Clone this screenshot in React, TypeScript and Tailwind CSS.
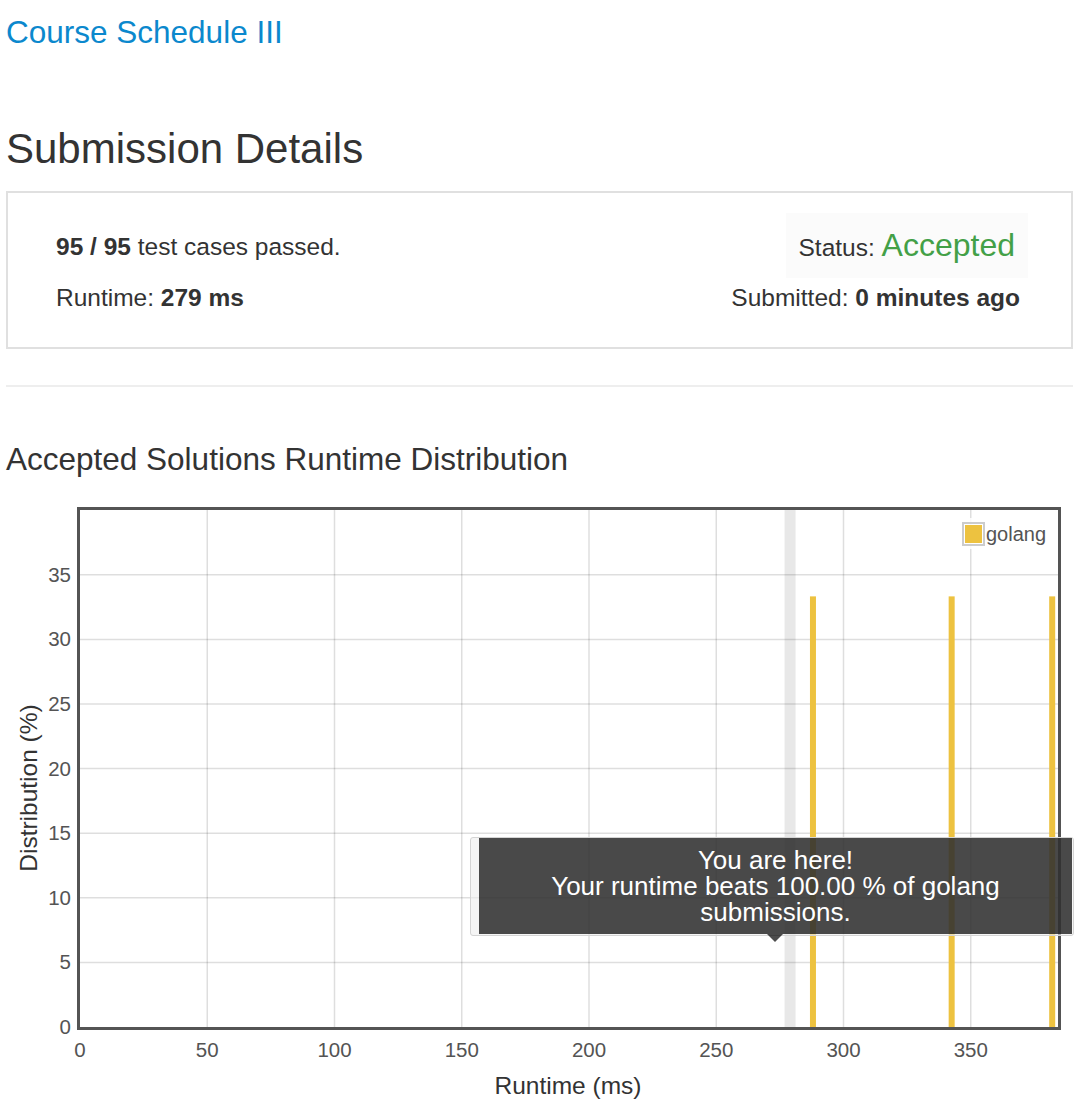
const X0 = 74;
const XS = 2.545;
const Y0 = 520;
const YS = 12.92;

const xTicks = [0, 50, 100, 150, 200, 250, 300, 350];
const yTicks = [0, 5, 10, 15, 20, 25, 30, 35];
const bars = [288, 342.5, 382];

function RuntimeChart() {
  return (
    <div className="relative mt-[30px] h-[594px]">
      <svg width={1067} height={594} className="block">
        <rect x={X0 + 279 * XS - 5.5} y={3} width={11} height={517} fill="#e8e8e8" />
        {xTicks.slice(1).map((v) => (
          <line
            key={`gx${v}`}
            x1={X0 + v * XS}
            x2={X0 + v * XS}
            y1={3}
            y2={520}
            stroke="rgba(0,0,0,0.13)"
            strokeWidth={1.5}
          />
        ))}
        {yTicks.slice(1).map((v) => (
          <line
            key={`gy${v}`}
            x1={74}
            x2={1052}
            y1={Y0 - v * YS}
            y2={Y0 - v * YS}
            stroke="rgba(0,0,0,0.13)"
            strokeWidth={1.5}
          />
        ))}
        {bars.map((ms) => (
          <rect
            key={ms}
            x={X0 + ms * XS - 3}
            y={Y0 - 33.33 * YS}
            width={6}
            height={33.33 * YS}
            fill="#edc240"
          />
        ))}
        <rect x={72.5} y={1.5} width={981} height={520} fill="none" stroke="#545454" strokeWidth={3} />
        {yTicks.map((v) => (
          <text key={`ly${v}`} x={65} y={Y0 - v * YS + 7} fontSize={20.5} fill="#545454" textAnchor="end">
            {v}
          </text>
        ))}
        {xTicks.map((v) => (
          <text key={`lx${v}`} x={X0 + v * XS} y={550} fontSize={20.5} fill="#545454" textAnchor="middle">
            {v}
          </text>
        ))}
        <text x={562} y={587} fontSize={24.5} fill="#333333" textAnchor="middle">
          Runtime (ms)
        </text>
        <text
          x={31}
          y={281}
          fontSize={24.5}
          fill="#333333"
          textAnchor="middle"
          transform="rotate(-90 31 281)"
        >
          Distribution (%)
        </text>
      </svg>

      {/* legend */}
      <div className="absolute left-[954px] top-[11px] flex h-[31px] items-center bg-white/85 pl-[2px] pr-[4px]">
        <div className="h-[24px] w-[23px] border-2 border-[#cccccc] p-[1px]">
          <div className="h-full w-full bg-[#edc240]" />
        </div>
        <span className="ml-[1px] text-[20px] leading-[24px] text-[#545454]">golang</span>
      </div>

      {/* tooltip */}
      <div className="absolute left-[464px] top-[330px] h-[99px] w-[604px] rounded-[3px] border border-[#d4d4d4] bg-[#eeeeee]/60">
        <div className="relative ml-[8px] h-[96px] w-[593px] bg-black/70 pt-[9px] text-center text-[26px] leading-[26px] text-white">
          You are here!
          <br />
          Your runtime beats 100.00 % of golang
          <br />
          submissions.
          <div className="absolute left-[288px] top-full h-0 w-0 border-x-[8px] border-t-[8px] border-x-transparent border-t-black/70" />
        </div>
      </div>
    </div>
  );
}

export default function App() {
  return (
    <div className="min-h-[1101px] bg-white px-[6px] font-['Liberation_Sans',Arial,sans-serif] text-[#333333]">
      <a href="#" className="mt-[14px] block text-[31.5px] leading-[36px] text-[#0b88cd]">
        Course Schedule III
      </a>

      <h1 className="mt-[75px] text-[42px] leading-[48px] font-normal">Submission Details</h1>

      <div className="mt-[18px] flex items-start justify-between border-2 border-[#e0e0e0] pt-[20px] pr-[51px] pb-[34px] pl-[48px]">
        <div className="mt-[19px] flex flex-col gap-[21px] text-[24.5px] leading-[30px]">
          <div>
            <span className="font-bold">95 / 95</span> test cases passed.
          </div>
          <div>
            Runtime: <span className="font-bold">279 ms</span>
          </div>
        </div>
        <div className="flex flex-col items-end">
          <div className="-mr-[8px] flex items-baseline bg-[#fbfbfb] pt-[14px] pr-[13px] pb-[15px] pl-[13px]">
            <span className="text-[24.5px] leading-[30px]">Status:&nbsp;</span>
            <span className="text-[32px] leading-[36px] text-[#43a047]">Accepted</span>
          </div>
          <div className="mt-[5px] text-[24.5px] leading-[30px]">
            Submitted: <span className="font-bold">0 minutes ago</span>
          </div>
        </div>
      </div>

      <div className="mt-[36px] border-t-2 border-[#eeeeee]" />

      <h3 className="mt-[54px] text-[31.5px] leading-[36px] font-normal">
        Accepted Solutions Runtime Distribution
      </h3>

      <RuntimeChart />
    </div>
  );
}
